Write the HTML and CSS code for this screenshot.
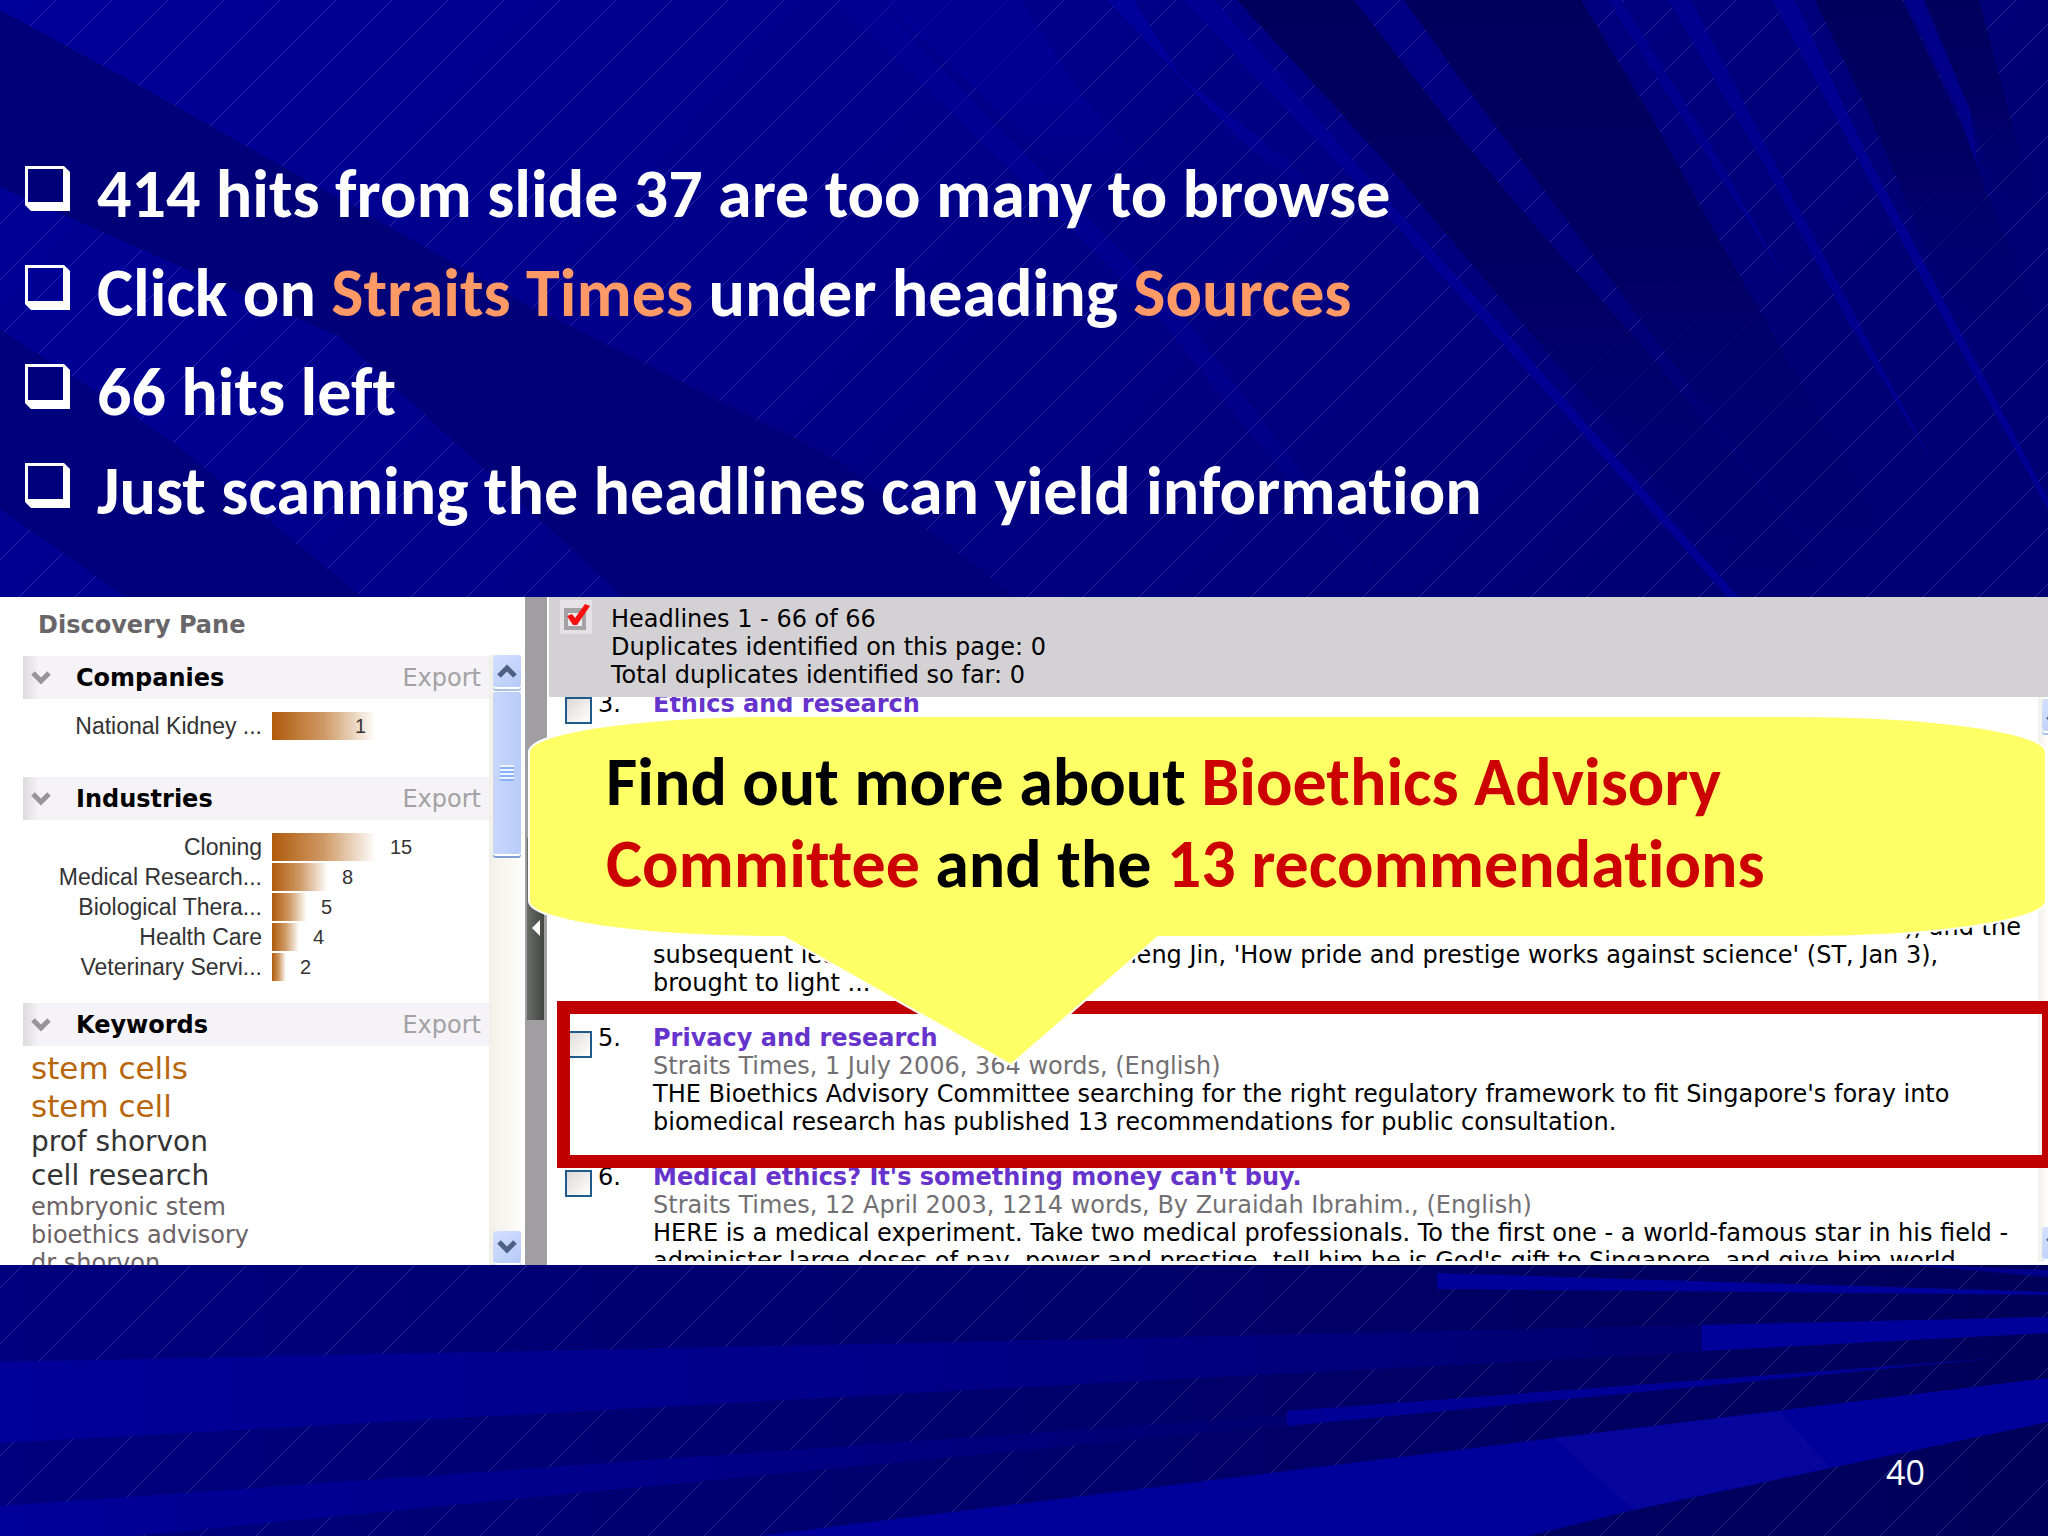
FILE: index.html
```html
<!DOCTYPE html>
<html lang="en">
<head>
  <meta charset="UTF-8">
  <meta name="viewport" content="width=device-width, initial-scale=1.0">
  <title>Slide 40</title>
  <link rel="stylesheet" href="styles.css">
</head>
<body>

  <svg class="backdrop" viewBox="0 0 2048 1536" preserveAspectRatio="none" aria-hidden="true">
    <defs>
      <linearGradient id="sky" x1="0" y1="0" x2="1" y2="0.3">
        <stop offset="0" stop-color="#00009a"/>
        <stop offset="0.5" stop-color="#000088"/>
        <stop offset="1" stop-color="#000074"/>
      </linearGradient>
      <linearGradient id="floor" x1="0" y1="0" x2="1" y2="0">
        <stop offset="0" stop-color="#00007e"/>
        <stop offset="0.6" stop-color="#000068"/>
        <stop offset="1" stop-color="#00005a"/>
      </linearGradient>
      <linearGradient id="band" x1="0" y1="0" x2="1" y2="0">
        <stop offset="0" stop-color="#00009a"/>
        <stop offset="0.5" stop-color="#00008a"/>
        <stop offset="1" stop-color="#000070"/>
      </linearGradient>
      <linearGradient id="glow" x1="0" y1="0" x2="0" y2="1">
        <stop offset="0" stop-color="#00009a"/>
        <stop offset="0.5" stop-color="#00009a"/>
        <stop offset="1" stop-color="#00009a" stop-opacity="0"/>
      </linearGradient>
      <linearGradient id="shade" x1="0" y1="0" x2="0" y2="1">
        <stop offset="0" stop-color="#00005c"/>
        <stop offset="0.5" stop-color="#000064"/>
        <stop offset="1" stop-color="#000070" stop-opacity="0"/>
      </linearGradient>
      <pattern id="hatch" width="56" height="56" patternUnits="userSpaceOnUse">
        <path d="M0 56 L56 0" stroke="#6a6ad0" stroke-opacity="0.35" stroke-width="1"/>
      </pattern>
    </defs>
    <rect width="2048" height="700" fill="url(#sky)"/>
    <rect y="700" width="2048" height="836" fill="url(#floor)"/>
    <rect width="2048" height="1536" fill="url(#hatch)"/>
    <!-- rays above the panel -->
    <path d="M0 10 L144 88 L522 302 L836 459 L1019 600 L627 600 L340 337 L0 187Z" fill="#000078"/>
    <path d="M0 329 L170 440 L366 600 L130 600 L0 509Z" fill="#00007c"/>
    <path d="M836 0 L875 0 L1010 140 L1175 306 L1400 600 L1380 600 L1150 306Z" fill="url(#glow)" opacity="0.6"/>
    <path d="M882 0 L1020 0 L1085 100 L1150 170 L1060 170Z" fill="url(#glow)" opacity="0.7"/>
    <path d="M1107 0 L1134 0 L1180 76 L1287 160 L1330 210 L1240 140Z" fill="url(#glow)"/>
    <path d="M1184 0 L1214 0 L1287 84 L1387 199 L1494 318 L1741 600 L1730 600 L1480 318 L1375 202 L1270 92Z" fill="#000094"/>
    <path d="M1237 0 L1354 0 L1461 138 L1548 241 L1641 344 L1850 600 L1760 600 L1488 283 L1381 157 L1304 73Z" fill="url(#shade)"/>
    <path d="M1404 0 L1581 0 L1648 111 L1728 256 L1768 325 L1900 560 L1820 560 L1688 383 L1574 230 L1461 80Z" fill="url(#shade)"/>
    <path d="M1608 0 L1621 0 L1707 138 L1788 283 L1695 138Z" fill="#00008e"/>
    <path d="M1668 0 L1691 0 L1774 161 L1860 325 L1935 467 L1850 325 L1762 161Z" fill="#000090"/>
    <path d="M1772 0 L1795 0 L1866 153 L1953 318 L2048 498 L2048 510 L1943 318 L1855 153Z" fill="#000092"/>
    <path d="M1815 0 L1902 0 L1962 126 L1989 199 L2048 340 L1990 340 L1935 268 L1868 111Z" fill="url(#shade)"/>
    <path d="M1905 0 L1922 0 L1970 110 L1978 168 L1958 110Z" fill="#00008a"/>
    <path d="M1925 0 L1979 0 L2015 134 L2048 220 L2000 210 L1970 110Z" fill="url(#shade)"/>
    <!-- bands below the panel -->
    <path d="M0 1362 L914 1343 L1702 1325 L1702 1352 L914 1393 L0 1443Z" fill="url(#band)"/>
    <path d="M1702 1325 L2048 1317 L2048 1333 L1702 1351Z" fill="#00009a"/>
    <path d="M0 1506 L1287 1415 L1287 1425 L131 1536 L0 1536Z" fill="url(#band)"/>
    <path d="M1287 1411 L1998 1358 L1287 1426Z" fill="#000096"/>
    <path d="M757 1536 L1554 1438 L2048 1378 L2048 1422 L1633 1510 L1528 1536Z" fill="#00009a"/>
    <path d="M1554 1438 L1780 1411 L1830 1468 L1633 1510Z" fill="#06069c"/>
    <path d="M1437 1273 L2048 1292 L2048 1295 L1437 1289Z" fill="#00009a"/>
    <path d="M1900 1264 L2048 1270 L2048 1277Z" fill="#00008a"/>
  </svg>

  <main class="slide">
    <ul class="points">
      <li><span class="box"></span>414 hits from slide 37 are too many to browse</li>
      <li><span class="box"></span>Click on <em>Straits Times</em> under heading <em>Sources</em></li>
      <li><span class="box"></span>66 hits left</li>
      <li><span class="box"></span>Just scanning the headlines can yield information</li>
    </ul>

    <div class="window">
      <aside class="discovery">
        <h2>Discovery Pane</h2>
        <div class="discovery-body">
          <div class="sections">
            <section>
              <div class="section-head">
                <svg class="chevron" viewBox="0 0 20 14"><path d="M2 2 L10 10 L18 2"/></svg>
                <h3>Companies</h3>
                <a href="#">Export</a>
              </div>
              <div class="chart">
                <div class="bar-row"><span class="label">National Kidney ...</span><span class="bar inside" style="width:104px">1</span></div>
              </div>
            </section>
            <section>
              <div class="section-head">
                <svg class="chevron" viewBox="0 0 20 14"><path d="M2 2 L10 10 L18 2"/></svg>
                <h3>Industries</h3>
                <a href="#">Export</a>
              </div>
              <div class="chart">
                <div class="bar-row"><span class="label">Cloning</span><span class="bar" style="width:104px"></span><span>15</span></div>
                <div class="bar-row"><span class="label">Medical Research...</span><span class="bar" style="width:56px"></span><span>8</span></div>
                <div class="bar-row"><span class="label">Biological Thera...</span><span class="bar" style="width:35px"></span><span>5</span></div>
                <div class="bar-row"><span class="label">Health Care</span><span class="bar" style="width:27px"></span><span>4</span></div>
                <div class="bar-row"><span class="label">Veterinary Servi...</span><span class="bar" style="width:14px"></span><span>2</span></div>
              </div>
            </section>
            <section>
              <div class="section-head">
                <svg class="chevron" viewBox="0 0 20 14"><path d="M2 2 L10 10 L18 2"/></svg>
                <h3>Keywords</h3>
                <a href="#">Export</a>
              </div>
              <div class="keywords">
                <a href="#" class="k1">stem cells</a>
                <a href="#" class="k1">stem cell</a>
                <a href="#" class="k2">prof shorvon</a>
                <a href="#" class="k2">cell research</a>
                <a href="#" class="k3">embryonic stem</a>
                <a href="#" class="k3">bioethics advisory</a>
                <a href="#" class="k3">dr shorvon</a>
              </div>
            </section>
          </div>
          <div class="scrollbar">
            <button class="scroll-btn" aria-label="Scroll up"><svg viewBox="0 0 20 14"><path d="M2 12 L10 4 L18 12"/></svg></button>
            <div class="thumb"></div>
            <button class="scroll-btn down" aria-label="Scroll down"><svg viewBox="0 0 20 14"><path d="M2 2 L10 10 L18 2"/></svg></button>
          </div>
        </div>
      </aside>

      <div class="splitter">
        <button class="handle" aria-label="Collapse pane"><svg viewBox="0 0 8 16"><path d="M8 0 L0 8 L8 16Z"/></svg></button>
      </div>

      <section class="headlines">
        <header class="results-head">
          <button class="select-all" aria-label="Select all">
            <svg viewBox="0 0 32 34">
              <rect x="4" y="8" width="22" height="22" fill="#a4a2a4"/>
              <rect x="8" y="13" width="14" height="13" fill="#eceaec"/>
              <path d="M7 16 L12 14 L15 18 L25 4 L30 6 L17 25 L13 25Z" fill="#f60f0f"/>
            </svg>
          </button>
          <div class="counts">
            <div>Headlines 1 - 66 of 66</div>
            <div>Duplicates identified on this page: 0</div>
            <div>Total duplicates identified so far: 0</div>
          </div>
        </header>
        <div class="results">
          <div class="hits">
            <article class="hit short">
              <input type="checkbox" id="hit3" aria-label="Ethics and research"><label for="hit3">3.</label>
              <div class="text"><a href="#">Ethics and research</a></div>
            </article>
            <article class="hit tall">
              <div class="text">
                <p class="tail-end">), and the</p>
                <p>subsequent letter by Assoc Prof Lee J Sheng Jin, 'How pride and prestige works against science' (ST, Jan 3),<br>brought to light ...</p>
              </div>
            </article>
            <article class="hit marked">
              <input type="checkbox" id="hit5" aria-label="Privacy and research"><label for="hit5">5.</label>
              <div class="text">
                <a href="#">Privacy and research</a>
                <p class="meta">Straits Times, 1 July 2006, 364 words, (English)</p>
                <p>THE Bioethics Advisory Committee searching for the right regulatory framework to fit Singapore's foray into<br>biomedical research has published 13 recommendations for public consultation.</p>
              </div>
            </article>
            <article class="hit">
              <input type="checkbox" id="hit6" aria-label="Medical ethics"><label for="hit6">6.</label>
              <div class="text">
                <a href="#">Medical ethics? It's something money can't buy.</a>
                <p class="meta">Straits Times, 12 April 2003, 1214 words, By Zuraidah Ibrahim., (English)</p>
                <p>HERE is a medical experiment. Take two medical professionals. To the first one - a world-famous star in his field -<br>administer large doses of pay, power and prestige, tell him he is God's gift to Singapore, and give him world-</p>
              </div>
            </article>
          </div>
          <div class="scrollbar edge">
            <button class="scroll-btn" aria-label="Scroll results up"><svg viewBox="0 0 20 14"><path d="M2 12 L10 4 L18 12"/></svg></button>
            <button class="scroll-btn down" aria-label="Scroll results down"><svg viewBox="0 0 20 14"><path d="M2 2 L10 10 L18 2"/></svg></button>
          </div>
        </div>
      </section>

      <div class="callout">
        <svg viewBox="0 0 1519 350" preserveAspectRatio="none" aria-hidden="true">
          <path d="M1 35 A252 36 0 0 1 253 -1 H1266 A252 36 0 0 1 1518 35 V184 A252 36 0 0 1 1266 220 H630 L483 348 L256 220 H253 A252 36 0 0 1 1 184Z"/>
        </svg>
        <p>Find out more about <strong>Bioethics Advisory<br>Committee</strong> and the <strong>13 recommendations</strong></p>
      </div>
    </div>

    <footer>40</footer>
  </main>

</body>
</html>
```
FILE: styles.css
```css
*, *::after {
  box-sizing: border-box;
}
body {
  margin: 0;
  background: #000078;
  color: #000;
  font-family: "DejaVu Sans", sans-serif;
  font-size: 24px;
  line-height: 28px;
  overflow-x: hidden;
}
h2, h3, p, ul {
  margin: 0;
  padding: 0;
}
a {
  text-decoration: none;
}
button {
  padding: 0;
  border: none;
  cursor: pointer;
}
.backdrop {
  position: absolute;
  top: 0;
  left: 0;
  width: 100%;
  height: 100%;
  z-index: -1;
}
.slide {
  display: flex;
  flex-direction: column;
  min-height: 100vh;
}

/* bullet points */
.points {
  list-style: none;
  padding: 144px 24px 57px;
  color: #fff;
  font-family: Carlito, Lato, sans-serif;
  font-size: 68px;
  font-weight: bold;
  font-variant-ligatures: none;
  line-height: 99px;
}
.points li {
  display: flex;
  align-items: center;
  white-space: pre;
}
.points em {
  color: #ff9966;
  font-style: normal;
}
.box {
  width: 45px;
  height: 45px;
  margin: 0 27px 10px 1px;
  border: 3px solid #fff;
  border-right-width: 7px;
  border-bottom-width: 9px;
  clip-path: polygon(0 0, 39px 0, 100% 6px, 100% 100%, 6px 100%, 0 39px);
}

/* screenshot window */
.window {
  position: relative;
  display: flex;
  height: 668px;
  background: #fff;
}
.discovery {
  display: flex;
  flex-direction: column;
  width: 525px;
  overflow: hidden;
}
.discovery h2 {
  padding: 14px 38px 16px;
  color: #686668;
  font-size: 24px;
  line-height: 28px;
}
.discovery-body {
  display: flex;
  flex: 1;
  min-height: 0;
}
.sections {
  flex: 1;
  padding: 1px 0 0 23px;
}
.section-head {
  display: flex;
  align-items: center;
  height: 43px;
  padding: 0 8px;
  background: linear-gradient(to right, #dcdadc, #f5f3f7 16px);
}
.section-head h3 {
  flex: 1;
  margin-left: 25px;
  font-size: 24px;
}
.section-head a {
  color: #a3a1a3;
}
.chevron {
  width: 20px;
  height: 14px;
}
.chevron path, .scroll-btn path {
  fill: none;
  stroke: #979597;
  stroke-width: 5;
}
.chart {
  min-height: 78px;
  padding: 12px 0 21px;
  font-family: "Liberation Sans", sans-serif;
}
.bar-row {
  display: flex;
  align-items: center;
  height: 30px;
  font-size: 20px;
  color: #333;
}
.bar-row .label {
  width: 239px;
  margin-right: 10px;
  font-size: 23px;
  text-align: right;
}
.bar {
  height: 28px;
  margin-right: 14px;
  background: linear-gradient(to right, #b05a0c, #cf9a66 50%, #fff);
}
.bar.inside {
  padding-right: 10px;
  text-align: right;
}
.keywords {
  display: flex;
  flex-direction: column;
  padding: 3px 8px;
}
.k1 {
  color: #b8660c;
  font-size: 31px;
  line-height: 38px;
}
.k2 {
  color: #333;
  font-size: 28px;
  line-height: 34px;
}
.k3 {
  color: #6a6264;
  font-size: 24px;
  line-height: 28px;
}

/* scrollbars */
.scrollbar {
  display: flex;
  flex-direction: column;
  width: 36px;
  padding: 0 4px 2px;
  background: linear-gradient(to right, #f1f0e8, #fefefc);
}
.scroll-btn {
  display: flex;
  align-items: center;
  justify-content: center;
  flex: none;
  height: 32px;
  border-radius: 3px;
  background: linear-gradient(135deg, #d4e0ff, #b6caf8);
  box-shadow: 0 2px 0 #fff, 0 4px 0 #a9c0ea;
}
.scroll-btn svg {
  width: 20px;
  height: 14px;
}
.scroll-btn path {
  stroke: #4d6185;
}
.scroll-btn.down {
  margin-top: auto;
}
.thumb {
  height: 162px;
  margin-top: 5px;
  border-radius: 3px;
  background:
    repeating-linear-gradient(#eef4ff 0 2px, #8cb0f8 2px 4px) center / 14px 16px no-repeat,
    linear-gradient(to right, #c8d6fe, #b8ccf8);
  box-shadow: 0 2px 0 #fff, 0 4px 0 #7f9fd4;
}
.splitter {
  display: flex;
  width: 24px;
  padding: 241px 3px 245px 2px;
  border-right: 2px solid #fff;
  background: #a09ea0;
}
.handle {
  width: 17px;
  background: linear-gradient(to right, #6a6c68, #444644);
}
.handle svg {
  width: 8px;
  height: 16px;
  fill: #fff;
}

/* headline list */
.headlines {
  display: flex;
  flex: 1;
  flex-direction: column;
  min-width: 0;
}
.results-head {
  display: flex;
  height: 100px;
  padding: 3px 11px;
  background: #d3d1d3;
}
.select-all {
  width: 32px;
  height: 34px;
  background: #e4e2e4;
}
.counts {
  padding: 5px 0 0 19px;
}
.results {
  display: flex;
  flex: 1;
  min-height: 0;
  border-bottom: 4px solid #fff;
  overflow: hidden;
}
.hits {
  flex: 1;
  min-width: 0;
  z-index: 1;
}
.hit {
  position: relative;
  display: flex;
  min-height: 139px;
  padding-left: 16px;
  white-space: nowrap;
}
.hit.short {
  margin-top: -7px;
}
.hit.tall {
  height: 195px;
  padding-top: 84px;
}
.hit input {
  appearance: none;
  width: 27px;
  height: 27px;
  margin: 7px 6px 0 0;
  border: 2px solid #1f5a8c;
  background: linear-gradient(135deg, #dcdad8, #fff);
}
.hit label {
  width: 55px;
}
.hit.tall .text {
  flex: 1;
  margin-left: 88px;
}
.hit a {
  color: #6633cc;
  font-weight: bold;
}
.meta {
  color: #727072;
}
.tail-end {
  padding-right: 17px;
  text-align: right;
}
.hit.marked {
  z-index: 2;
}
.marked::after {
  content: "";
  position: absolute;
  top: -23px;
  left: 8px;
  right: -17px;
  height: 167px;
  border: 13px solid #c00000;
  pointer-events: none;
}
.scrollbar.edge {
  width: 10px;
  padding: 2px 0 2px 4px;
  overflow: hidden;
}
.edge .scroll-btn {
  width: 28px;
}

/* callout over the window */
.callout {
  position: absolute;
  z-index: 3;
  top: 120px;
  left: 528px;
  right: 1px;
  height: 350px;
  padding: 24px 78px;
  font-family: Carlito, Lato, sans-serif;
  font-size: 68px;
  font-weight: bold;
  font-variant-ligatures: none;
  line-height: 82px;
  white-space: nowrap;
}
.callout svg {
  position: absolute;
  top: 0;
  left: 0;
  width: 100%;
  height: 100%;
  overflow: visible;
  fill: #ffff66;
  stroke: #fff;
  stroke-width: 2;
}
.callout p {
  position: relative;
}
.callout strong {
  color: #cc0000;
}

footer {
  margin-top: auto;
  padding: 0 123px 46px;
  color: #fff;
  font-family: "Open Sans", sans-serif;
  font-size: 34px;
  line-height: 36px;
  text-align: right;
}
```
